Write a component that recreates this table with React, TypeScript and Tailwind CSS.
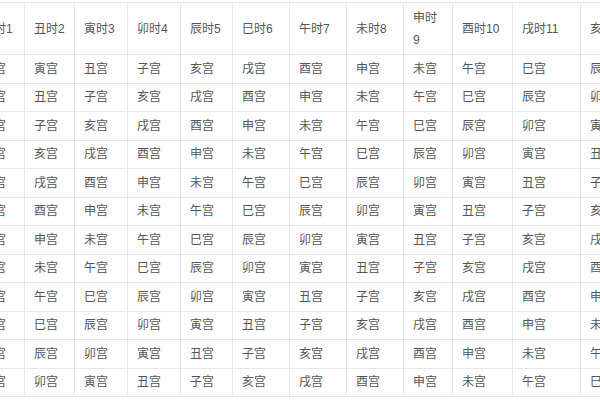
const hours = [
  { label: '子时1', w: 'w-[52px]' },
  { label: '丑时2', w: 'w-[50px]' },
  { label: '寅时3', w: 'w-[53px]' },
  { label: '卯时4', w: 'w-[53px]' },
  { label: '辰时5', w: 'w-[52px]' },
  { label: '巳时6', w: 'w-[57px]' },
  { label: '午时7', w: 'w-[57px]' },
  { label: '未时8', w: 'w-[57px]' },
  { label: '申时9', w: 'w-[49px]' },
  { label: '酉时10', w: 'w-[60px]' },
  { label: '戌时11', w: 'w-[68px]' },
  { label: '亥时12', w: 'w-[60px]' },
];

// palaces run backwards from 卯, one step per hour and per month
const branches = ['子', '丑', '寅', '卯', '辰', '巳', '午', '未', '申', '酉', '戌', '亥'];

const rows = Array.from({ length: 12 }, (_, month) =>
  Array.from({ length: 12 }, (_, hour) => branches[(((3 - month - hour) % 12) + 12) % 12] + '宫'),
);

export default function App() {
  return (
    <div className="h-[400px] w-[600px] overflow-hidden bg-white pt-[2px] font-['Liberation_Sans','Noto_Sans_CJK_SC',sans-serif] text-[12px] text-[#555]">
      <table className="ml-[-28px] w-[648px] table-fixed border-collapse">
        <thead>
          <tr className="h-[52px]">
            {hours.map((h) => (
              <th
                key={h.label}
                className={`${h.w} border border-[#e6e6e6] pl-[9px] pr-[4px] text-left align-middle font-normal leading-[22px]`}
              >
                {h.label === '申时9' ? (
                  <>
                    申时
                    <br />9
                  </>
                ) : (
                  h.label
                )}
              </th>
            ))}
          </tr>
        </thead>
        <tbody>
          {rows.map((row, i) => (
            <tr key={i} className="h-[28.5px]">
              {row.map((cell, j) => (
                <td key={j} className="border border-[#e6e6e6] pl-[9px] pr-[4px] align-middle leading-[16px]">
                  {cell}
                </td>
              ))}
            </tr>
          ))}
        </tbody>
      </table>
    </div>
  );
}
